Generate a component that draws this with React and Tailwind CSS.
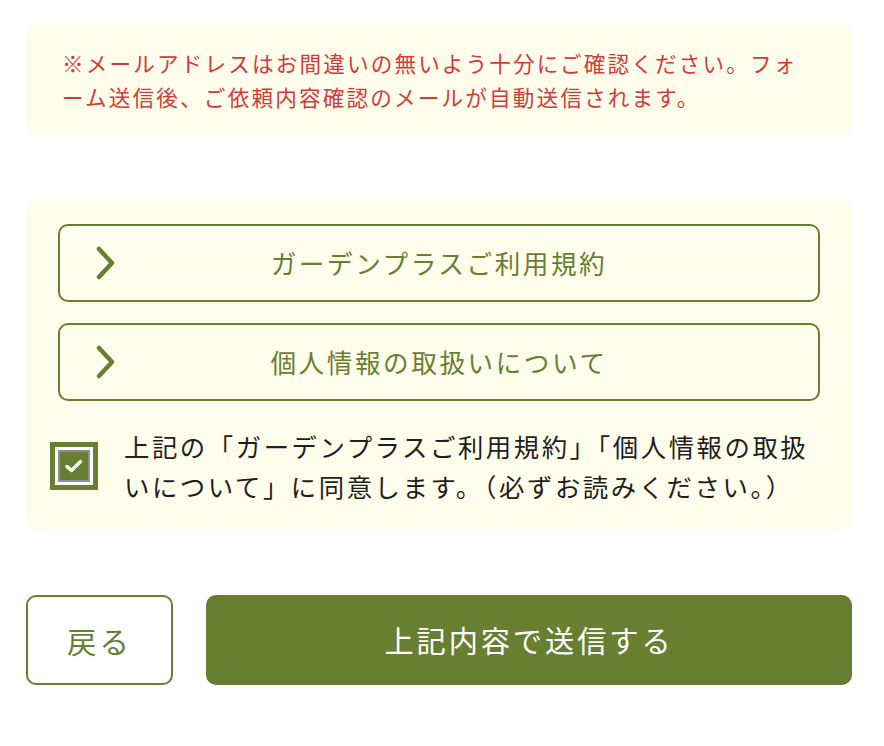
const GREEN = '#687f31';

const Chevron = () => (
  <svg width="22" height="34" viewBox="0 0 22 34" fill="none" className="shrink-0">
    <path d="M4 3 L17 17 L4 31" stroke={GREEN} strokeWidth="4.5" strokeLinecap="round" strokeLinejoin="round" />
  </svg>
);

const TermsButton = ({ label }) => (
  <button className="relative flex h-[78px] w-full items-center justify-center rounded-[10px] border-2 border-[#687f31] bg-transparent">
    <span className="absolute left-[35px] top-1/2 -translate-y-1/2">
      <Chevron />
    </span>
    <span className="text-[25.6px] tracking-[0.1em] text-[#687f31]">{label}</span>
  </button>
);

const App = () => {
  return (
    <div
      className="min-h-screen bg-white pl-[26px] pr-[32px] pt-[24px]"
      style={{ fontFamily: '"Noto Sans CJK JP", "Noto Sans", sans-serif' }}
    >
      {/* Notice */}
      <div className="rounded-[10px] bg-[#fefdeb] px-[36px] py-[22px]">
        <p className="text-[21.6px] leading-[34px] tracking-[0.1em] text-[#d23b3b]">
          ※メールアドレスはお間違いの無いよう十分にご確認ください。フォーム送信後、ご依頼内容確認のメールが自動送信されます。
        </p>
      </div>

      {/* Terms */}
      <div className="mt-[64px] rounded-[10px] bg-[#fefdeb] px-[32px] pb-[23px] pt-[24px]">
        <div className="flex flex-col gap-[21px]">
          <TermsButton label="ガーデンプラスご利用規約" />
          <TermsButton label="個人情報の取扱いについて" />
        </div>
        <label className="-ml-[8px] mt-[25px] flex items-center gap-[26px]">
          <span className="flex h-[48px] w-[48px] shrink-0 items-center justify-center border-[5px] border-[#687f31] bg-white">
            <span className="flex h-[32px] w-[32px] items-center justify-center border-2 border-[#8f8f9c] bg-[#687f31]">
              <svg width="20" height="16" viewBox="0 0 20 16" fill="none">
                <path d="M3 8.5 L7.5 12.5 L16.5 3.5" stroke="white" strokeWidth="3.4" strokeLinecap="round" strokeLinejoin="round" />
              </svg>
            </span>
          </span>
          <span className="text-[25.4px] leading-[40px] tracking-[0.1em] text-[#1e1e1e]">
            上記の「ガーデンプラスご利用規約」「個人情報の取扱いについて」に同意します。（必ずお読みください。）
          </span>
        </label>
      </div>

      {/* Actions */}
      <div className="mt-[66px] flex gap-[33px]">
        <button className="flex h-[90px] w-[147px] shrink-0 items-center justify-center rounded-[10px] border-2 border-[#687f31] bg-white text-[29.5px] tracking-[0.1em] text-[#687f31]">
          戻る
        </button>
        <button className="flex h-[90px] flex-1 items-center justify-center rounded-[10px] bg-[#687f31] text-[29.2px] tracking-[0.1em] text-white">
          上記内容で送信する
        </button>
      </div>
    </div>
  );
};

export default App;
